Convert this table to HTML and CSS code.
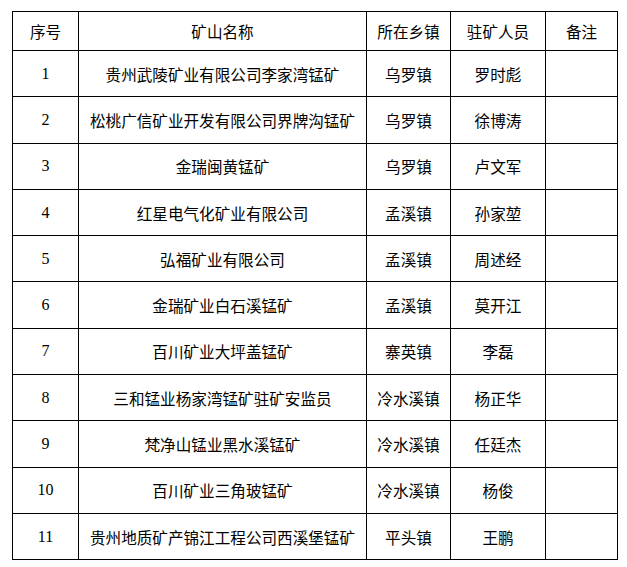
FILE: index.html
```html
<!DOCTYPE html>
<html lang="zh-CN">
<head>
<meta charset="utf-8">
<title>驻矿人员</title>
<link rel="stylesheet" href="styles.css">
</head>
<body>
<table class="mines">
  <colgroup>
    <col class="c-no">
    <col class="c-name">
    <col class="c-town">
    <col class="c-staff">
    <col class="c-note">
  </colgroup>
  <thead>
    <tr class="head-row"><th>序号</th><th>矿山名称</th><th>所在乡镇</th><th>驻矿人员</th><th>备注</th></tr>
  </thead>
  <tbody>
    <tr><td class="num">1</td><td>贵州武陵矿业有限公司李家湾锰矿</td><td>乌罗镇</td><td>罗时彪</td><td></td></tr>
    <tr><td class="num">2</td><td>松桃广信矿业开发有限公司界牌沟锰矿</td><td>乌罗镇</td><td>徐博涛</td><td></td></tr>
    <tr><td class="num">3</td><td>金瑞闽黄锰矿</td><td>乌罗镇</td><td>卢文军</td><td></td></tr>
    <tr><td class="num">4</td><td>红星电气化矿业有限公司</td><td>孟溪镇</td><td>孙家堃</td><td></td></tr>
    <tr><td class="num">5</td><td>弘福矿业有限公司</td><td>孟溪镇</td><td>周述经</td><td></td></tr>
    <tr><td class="num">6</td><td>金瑞矿业白石溪锰矿</td><td>孟溪镇</td><td>莫开江</td><td></td></tr>
    <tr><td class="num">7</td><td>百川矿业大坪盖锰矿</td><td>寨英镇</td><td>李磊</td><td></td></tr>
    <tr><td class="num">8</td><td>三和锰业杨家湾锰矿驻矿安监员</td><td>冷水溪镇</td><td>杨正华</td><td></td></tr>
    <tr><td class="num">9</td><td>梵净山锰业黑水溪锰矿</td><td>冷水溪镇</td><td>任廷杰</td><td></td></tr>
    <tr><td class="num">10</td><td>百川矿业三角玻锰矿</td><td>冷水溪镇</td><td>杨俊</td><td></td></tr>
    <tr><td class="num">11</td><td>贵州地质矿产锦江工程公司西溪堡锰矿</td><td>平头镇</td><td>王鹏</td><td></td></tr>
  </tbody>
</table>
</body>
</html>
```
FILE: styles.css
```css
html, body {
  margin: 0;
  padding: 0;
  background: #ffffff;
}
body {
  padding: 11px 0 0 12px;
  font-family: "Noto Sans CJK SC", "Noto Sans", sans-serif;
  color: #000;
}
.mines {
  border-collapse: collapse;
  table-layout: fixed;
  width: 605px;
}
.c-no { width: 66px; }
.c-name { width: 288px; }
.c-town { width: 84px; }
.c-staff { width: 95px; }
.c-note { width: 72px; }
.mines th,
.mines td {
  border: 1px solid #000;
  padding: 0;
  text-align: center;
  vertical-align: middle;
  font-size: 15.6px;
  font-weight: normal;
  line-height: 20px;
  white-space: nowrap;
  overflow: hidden;
}
.head-row th {
  height: 38px;
}
.mines tbody td {
  height: 45.3px;
}
.mines td.num {
  font-family: "Liberation Serif", serif;
  font-size: 16px;
}
```
